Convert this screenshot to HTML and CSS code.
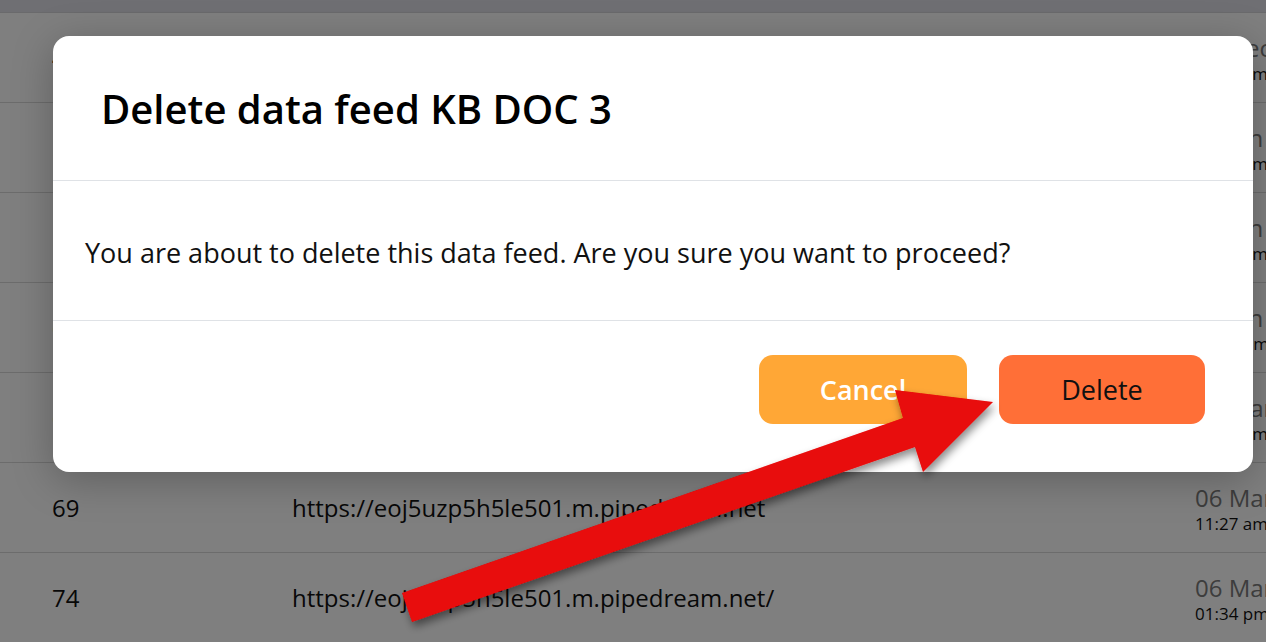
FILE: index.html
```html
<!DOCTYPE html>
<html>
<head>
<meta charset="utf-8">
<link rel="stylesheet" href="styles.css">
</head>
<body>
<div class="page">
  <div class="topband"></div>
  <div class="table">
    <div class="row"><div class="c-id">48</div><div class="c-url">https://eoj5uzp5h5le501.m.pipedream.net</div><div class="c-date"><span class="d">12 Dec</span><span class="t">10:42 am</span></div></div>
    <div class="row"><div class="c-id">52</div><div class="c-url">https://eoj5uzp5h5le501.m.pipedream.net</div><div class="c-date"><span class="d">06 Jan</span><span class="t">09:15 am</span></div></div>
    <div class="row"><div class="c-id">55</div><div class="c-url">https://eoj5uzp5h5le501.m.pipedream.net</div><div class="c-date"><span class="d">06 Jan</span><span class="t">10:03 am</span></div></div>
    <div class="row"><div class="c-id">61</div><div class="c-url">https://eoj5uzp5h5le501.m.pipedream.net</div><div class="c-date"><span class="d">06 Jan</span><span class="t">02:20 pm</span></div></div>
    <div class="row"><div class="c-id">65</div><div class="c-url">https://eoj5uzp5h5le501.m.pipedream.net</div><div class="c-date"><span class="d">06 Mar</span><span class="t">10:51 am</span></div></div>
    <div class="row"><div class="c-id">69</div><div class="c-url">https://eoj5uzp5h5le501.m.pipedream.net</div><div class="c-date"><span class="d">06 Mar</span><span class="t">11:27 am</span></div></div>
    <div class="row"><div class="c-id">74</div><div class="c-url">https://eoj5uzp5h5le501.m.pipedream.net/</div><div class="c-date"><span class="d">06 Mar</span><span class="t">01:34 pm</span></div></div>
  </div>
</div>
<div class="overlay">
  <div class="modal">
    <div class="modal-head"><h2 class="title">Delete data feed KB DOC 3</h2></div>
    <div class="modal-body"><p class="msg">You are about to delete this data feed. Are you sure you want to proceed?</p></div>
    <div class="modal-foot">
      <button class="btn btn-cancel">Cancel</button>
      <button class="btn btn-delete">Delete</button>
    </div>
  </div>
</div>
<svg class="arrow" width="1266" height="642" viewBox="0 0 1266 642">
  <defs>
    <filter id="sh" x="-10%" y="-10%" width="120%" height="130%">
      <feDropShadow dx="2" dy="5" stdDeviation="4" flood-color="#000" flood-opacity="0.45"/>
    </filter>
  </defs>
  <polygon filter="url(#sh)" fill="#e80808" points="402,593 903,418 895,390 993,402 923,472 915,447 412,622"/>
</svg>
</body>
</html>
```
FILE: styles.css
```css
html, body {
  margin: 0;
  padding: 0;
}
body {
  width: 1266px;
  height: 642px;
  overflow: hidden;
  position: relative;
  background: #fff;
  font-family: "Open Sans", "Liberation Sans", sans-serif;
  color: #222;
}
.page {
  display: flex;
  flex-direction: column;
}
.topband {
  height: 12px;
  background: #dedee6;
  border-bottom: 1px solid #d4d4d8;
}
.table {
  display: flex;
  flex-direction: column;
}
.row {
  height: 89px;
  border-bottom: 1px solid #d8d8d8;
  display: grid;
  grid-template-columns: 240px 903px 1fr;
  align-items: center;
  padding-left: 52px;
  white-space: nowrap;
  font-size: 24px;
  color: #111;
}
.c-date {
  display: flex;
  flex-direction: column;
  line-height: 1.25;
  padding-top: 2px;
}
.c-date .d {
  font-size: 24px;
  color: #7a7a7a;
}
.c-date .t {
  font-size: 17px;
  color: #111;
}
.overlay {
  position: absolute;
  inset: 0;
  background: rgba(0, 0, 0, 0.5);
}
.modal {
  position: absolute;
  left: 53px;
  top: 36px;
  width: 1200px;
  background: #fff;
  border-radius: 16px;
  box-shadow: 0 8px 40px rgba(0, 0, 0, 0.25);
  display: flex;
  flex-direction: column;
}
.modal-head {
  height: 144px;
  border-bottom: 1px solid #dfe2e6;
  display: flex;
  align-items: center;
  padding-left: 48px;
}
.title {
  margin: 0;
  font-size: 40px;
  font-weight: 600;
  color: #000;
}
.modal-body {
  height: 139px;
  border-bottom: 1px solid #dfe2e6;
  display: flex;
  align-items: center;
  padding-left: 32px;
}
.msg {
  margin: 0;
  padding-top: 4px;
  font-size: 27px;
  color: #111;
}
.modal-foot {
  display: flex;
  justify-content: flex-end;
  gap: 32px;
  padding: 34px 48px 48px;
}
.btn {
  height: 69px;
  border: none;
  border-radius: 14px;
  font-family: inherit;
  font-size: 27px;
  font-weight: 600;
}
.btn-cancel {
  width: 208px;
  background: #ffa736;
  color: #fff;
}
.btn-delete {
  width: 206px;
  background: #ff6f37;
  color: #111;
  font-weight: 500;
}
.arrow {
  position: absolute;
  left: 0;
  top: 0;
}
```
